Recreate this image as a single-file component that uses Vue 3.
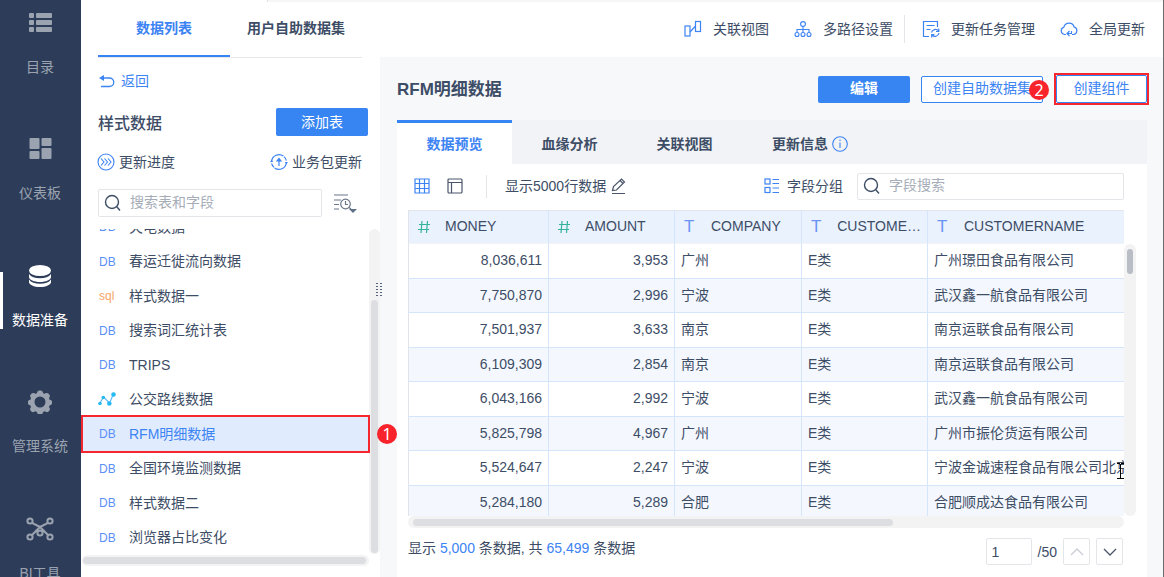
<script setup>
import { ref } from 'vue'

const nav = [
  { id: 'list', label: '目录' },
  { id: 'dash', label: '仪表板' },
  { id: 'db', label: '数据准备', active: true },
  { id: 'gear', label: '管理系统' },
  { id: 'tool', label: 'BI工具' },
]
const tables = [
  { type: 'DB', name: '火电数据' },
  { type: 'DB', name: '春运迁徙流向数据' },
  { type: 'sql', name: '样式数据一' },
  { type: 'DB', name: '搜索词汇统计表' },
  { type: 'DB', name: 'TRIPS' },
  { type: 'line', name: '公交路线数据' },
  { type: 'DB', name: 'RFM明细数据', active: true },
  { type: 'DB', name: '全国环境监测数据' },
  { type: 'DB', name: '样式数据二' },
  { type: 'DB', name: '浏览器占比变化' },
]
const columns = [
  { kind: 'num', name: 'MONEY' },
  { kind: 'num', name: 'AMOUNT' },
  { kind: 'text', name: 'COMPANY' },
  { kind: 'text', name: 'CUSTOME…' },
  { kind: 'text', name: 'CUSTOMERNAME' },
]
const rows = [
  ['8,036,611', '3,953', '广州', 'E类', '广州璟田食品有限公司'],
  ['7,750,870', '2,996', '宁波', 'E类', '武汉鑫一航食品有限公司'],
  ['7,501,937', '3,633', '南京', 'E类', '南京运联食品有限公司'],
  ['6,109,309', '2,854', '南京', 'E类', '南京运联食品有限公司'],
  ['6,043,166', '2,992', '宁波', 'E类', '武汉鑫一航食品有限公司'],
  ['5,825,798', '4,967', '广州', 'E类', '广州市振伦货运有限公司'],
  ['5,524,647', '2,247', '宁波', 'E类', '宁波金诚速程食品有限公司北京'],
  ['5,284,180', '5,289', '合肥', 'E类', '合肥顺成达食品有限公司'],
]
const tableQuery = ref('')
const fieldQuery = ref('')
const page = ref('1')
</script>

<template>
  <div class="app">
    <nav class="sidebar">
      <a v-for="n in nav" :key="n.id" href="#" class="nav-item" :class="{ active: n.active }">
        <span class="nav-icon">
          <svg v-if="n.id === 'list'" width="24" height="24" viewBox="0 0 24 24" fill="currentColor">
            <rect x="1" y="2" width="5" height="5" rx="1" /><rect x="8" y="2" width="16" height="5" rx="1" />
            <rect x="1" y="9" width="5" height="5" rx="1" /><rect x="8" y="9" width="16" height="5" rx="1" />
            <rect x="1" y="16" width="5" height="5" rx="1" /><rect x="8" y="16" width="16" height="5" rx="1" />
          </svg>
          <svg v-else-if="n.id === 'dash'" width="24" height="24" viewBox="0 0 24 24" fill="currentColor">
            <rect x="1.500" y="1" width="10" height="11" rx="1" /><rect x="13.500" y="1" width="10" height="8" rx="1" />
            <rect x="1.500" y="14" width="10" height="8" rx="1" /><rect x="13.500" y="11" width="10" height="11" rx="1" />
          </svg>
          <svg v-else-if="n.id === 'db'" width="24" height="24" viewBox="0 0 24 24" fill="currentColor">
            <ellipse cx="12" cy="6.500" rx="11" ry="5.500" />
            <path d="M1 10c2 3 6 4.300 11 4.300S21 13 23 10v3c0 2.700-5 5-11 5S1 15.700 1 13z" />
            <path d="M1 15.500c2 3 6 4.300 11 4.300s9-1.300 11-4.300v2.500c0 2.900-5 5-11 5S1 20.900 1 18z" />
          </svg>
          <svg v-else-if="n.id === 'gear'" width="24" height="24" viewBox="0 0 24 24" fill="currentColor" fill-rule="evenodd">
            <path d="M9.500 1.500C10 0 14 0 14.500 1.500l.6 1.700 1.500.6 1.700-.8c1.500-.6 4.200 2 3.500 3.500l-.8 1.700.6 1.500 1.600.6c1.200.6 1.200 3.800 0 4.400l-1.600.7-.6 1.500.8 1.700c.7 1.500-2 4.100-3.500 3.500l-1.700-.8-1.500.6-.6 1.700c-.5 1.500-4.500 1.500-5 0l-.6-1.700-1.500-.6-1.700.8c-1.500.6-4.200-2-3.500-3.500l.8-1.700-.6-1.500-1.600-.7c-1.200-.6-1.200-3.800 0-4.400l1.600-.6.6-1.500-.8-1.700C1.500 5 4.200 2.400 5.700 3l1.700.8 1.500-.6zM12 6.500a5.500 5.500 0 1 0 0 11 5.500 5.500 0 0 0 0-11z" />
          </svg>
          <svg v-else width="28" height="24" viewBox="0 0 28 24" fill="none" stroke="currentColor" stroke-width="2">
            <circle cx="4" cy="4" r="2.600" /><circle cx="24" cy="4" r="2.600" /><circle cx="4" cy="20" r="2.600" /><circle cx="24" cy="20" r="2.600" />
            <circle cx="14" cy="16" r="2.600" />
            <path d="M6 5.800l8 4.200 8-4.200M6 18l8-8 8 8M11.500 15L10 12.500M16.500 15l1.500-2.500" />
          </svg>
        </span>
        <span class="nav-label">{{ n.label }}</span>
      </a>
    </nav>

    <aside class="panel">
      <div class="panel-tabs">
        <button class="ptab on">数据列表</button>
        <button class="ptab">用户自助数据集</button>
      </div>
      <div class="panel-head">
        <a href="#" class="back">
          <svg width="17" height="14" viewBox="0 0 17 14" fill="none" stroke="currentColor" stroke-width="1.300">
            <path d="M3 4h8.500a4 4 0 0 1 0 8.500H3" /><path d="M1 4l5-3v6z" fill="currentColor" stroke="none" />
          </svg>
          返回
        </a>
        <div class="title-row">
          <h2>样式数据</h2>
          <button class="primary">添加表</button>
        </div>
        <div class="update-row">
          <button class="plain">
            <svg width="18" height="18" viewBox="0 0 18 18" fill="none" stroke="#3c83f3" stroke-width="1.100">
              <circle cx="9" cy="9" r="8" /><path d="M4 5.500L7 9l-3 3.500M7.500 5.500l3 3.500-3 3.500M11 5.500L14 9l-3 3.500" />
            </svg>
            更新进度
          </button>
          <button class="plain">
            <svg width="18" height="18" viewBox="0 0 18 18" fill="none" stroke="#3c83f3" stroke-width="1.200">
              <path d="M1.600 9A7.400 7.400 0 0 1 14 3.600M16.400 9A7.400 7.400 0 0 1 4 14.400M14 3.600q2 2 2.400 4M4 14.400q-2-2-2.400-4" stroke-dasharray="16 2" />
              <path d="M9 13V6" /><path d="M9 4.500L5.800 8.500h6.400zM0 9h3.200L1.600 6.800zM14.800 9H18l-1.600 2.200z" fill="#3c83f3" stroke="none" />
            </svg>
            业务包更新
          </button>
        </div>
        <div class="search-row">
          <label class="search">
            <svg width="18" height="18" viewBox="0 0 18 18" fill="none" stroke="#3d4d66" stroke-width="1.400"><circle cx="8" cy="8" r="6.500" /><path d="M12.800 12.800L16 16.500" /></svg>
            <input v-model="tableQuery" type="text" placeholder="搜索表和字段" aria-label="搜索表和字段" />
          </label>
          <button class="plain" aria-label="排序">
            <svg width="23" height="20" viewBox="0 0 23 20" fill="none" stroke="#6b7688" stroke-width="1.200">
              <path d="M0 2h14M0 7h7M0 11.500h5M0 16h5" /><circle cx="11.500" cy="11" r="4.800" /><path d="M11.500 8v3.500H14M15 14.500l2 1.500" />
              <path d="M15 16h8l-4 4z" fill="#5f6f87" stroke="none" />
            </svg>
          </button>
        </div>
      </div>
      <div class="list-area">
        <ul class="list">
          <li v-for="t in tables" :key="t.name">
            <a href="#" :class="{ active: t.active }">
              <svg v-if="t.type === 'line'" class="kind" width="18" height="14" viewBox="0 0 18 14" fill="#27b9f2">
                <path d="M2 11l3.500-6 6 6L15.500 2" fill="none" stroke="#5fb8f5" stroke-width="1.200" />
                <circle cx="2" cy="11.500" r="1.800" /><circle cx="5.300" cy="5.500" r="1.800" /><circle cx="11.300" cy="11.500" r="2.300" /><circle cx="15.500" cy="2.500" r="2.300" />
              </svg>
              <span v-else class="kind" :class="{ sql: t.type === 'sql' }">{{ t.type }}</span>
              <span>{{ t.name }}</span>
            </a>
          </li>
        </ul>
        <div class="vbar"><i></i></div>
      </div>
      <div class="hbar"><i></i></div>
      <span class="badge one">1</span>
      <svg class="grip" width="6" height="15" viewBox="0 0 6 15" fill="#55637a">
        <template v-for="k in 5" :key="k"><rect x="0" :y="(k - 1) * 3" width="2" height="1" /><rect x="4" :y="(k - 1) * 3" width="2" height="1" /></template>
      </svg>
    </aside>

    <div class="right">
      <header class="topbar">
        <button class="plain">
          <svg width="18" height="18" viewBox="0 0 18 18" fill="none" stroke="#3c83f3" stroke-width="1.200"><rect x="1" y="6" width="5" height="10" /><rect x="11.500" y="1.500" width="5" height="10" /><path d="M6 12l5.500-6" /></svg>
          关联视图
        </button>
        <button class="plain">
          <svg width="18" height="18" viewBox="0 0 18 18" fill="none" stroke="#3c83f3" stroke-width="1.100"><circle cx="9" cy="4" r="2.400" /><circle cx="3" cy="14.500" r="2" /><circle cx="9" cy="14.500" r="2" /><circle cx="15" cy="14.500" r="2" /><path d="M9 6.400v6M3 12.500V9.500h12v3" /></svg>
          多路径设置
        </button>
        <span class="sep"></span>
        <button class="plain">
          <svg width="18" height="18" viewBox="0 0 18 18" fill="none" stroke="#3c83f3" stroke-width="1.200"><path d="M7 16.500H1.500v-15h14V7M4.500 5.500h8M4.500 9.500h4" /><path d="M9.500 12.500a4 4 0 0 1 7-1.500M17 13a4 4 0 0 1-7 2M16.800 8.500V11.500H14M9.700 17.500V14.700h2.700" /></svg>
          更新任务管理
        </button>
        <button class="plain">
          <svg width="18" height="18" viewBox="0 0 18 18" fill="none" stroke="#3c83f3" stroke-width="1.200"><path d="M6 14.500H4.500a3.800 3.800 0 0 1-.6-7.400 5.300 5.300 0 0 1 10.200-.2 3.900 3.900 0 0 1-.6 7.600H12" /><path d="M7 13.500h4.500V11M9.500 11L7 13.500l2.500 2.500" /></svg>
          全局更新
        </button>
      </header>

      <main class="main">
        <div class="heading">
          <h1>RFM明细数据</h1>
          <button class="primary">编辑</button>
          <div class="badge-host">
            <button class="outline wide">创建自助数据集</button>
            <span class="badge two">2</span>
          </div>
          <div class="mark"><button class="outline">创建组件</button></div>
        </div>

        <div class="card">
          <div class="tabs">
            <button class="tab on">数据预览</button>
            <button class="tab">血缘分析</button>
            <button class="tab">关联视图</button>
            <button class="tab info">更新信息
              <svg width="16" height="16" viewBox="0 0 16 16" fill="none" stroke="#3c83f3" stroke-width="1.100"><circle cx="8" cy="8" r="7.300" /><path d="M8 6.500V12M8 3.500v1.500" /></svg>
            </button>
          </div>

          <div class="tools">
            <button class="plain" aria-label="表格">
              <svg width="16" height="16" viewBox="0 0 16 16" fill="none" stroke="#3c83f3" stroke-width="1.200"><path d="M1 1h14v14H1zM1 5.500h14M1 10.500h14M5.500 1v14M10.500 1v14" /></svg>
            </button>
            <button class="plain second" aria-label="布局">
              <svg width="16" height="16" viewBox="0 0 16 16" fill="none" stroke="#4b566b" stroke-width="1.200"><rect x="1" y="1" width="14" height="14" rx="1" /><path d="M1 4.500h14M4.500 4.500V15" /></svg>
            </button>
            <span class="sep short"></span>
            <button class="plain limit">显示5000行数据
              <svg width="16" height="18" viewBox="0 0 16 18" fill="none" stroke="#4b566b" stroke-width="1.200"><path d="M1.500 13.500l1-4L10.500 2l3 3-8 8zM9 3.500l3 3M1 16.500h13" /></svg>
            </button>
            <button class="plain group">
              <svg width="16" height="16" viewBox="0 0 16 16" fill="none" stroke="#3c83f3" stroke-width="1.200"><rect x="1" y="1" width="5" height="5" /><rect x="1" y="9.500" width="5" height="5" /><path d="M8.500 1.500H15M8.500 5.500H15M8.500 10H15M8.500 14.500H15" /></svg>
              字段分组
            </button>
            <label class="search field">
              <svg width="18" height="18" viewBox="0 0 18 18" fill="none" stroke="#3d4d66" stroke-width="1.400"><circle cx="8" cy="8" r="6.500" /><path d="M12.800 12.800L16 16.500" /></svg>
              <input v-model="fieldQuery" type="text" placeholder="字段搜索" aria-label="字段搜索" />
            </label>
          </div>

          <div class="grid-area">
            <div class="grid-clip">
              <table>
                <colgroup><col class="c1" /><col class="c2" /><col class="c3" /><col class="c2" /><col /></colgroup>
                <thead>
                  <tr>
                    <th v-for="c in columns" :key="c.name">
                      <div class="th">
                        <svg v-if="c.kind === 'num'" width="12" height="14" viewBox="0 0 12 14" fill="none" stroke="#35b39d" stroke-width="1.200"><path d="M4 1L3 13M9.500 1l-1 12M1 4.500h11M0 9.500h11" /></svg>
                        <span v-else class="tt">T</span>
                        <span class="cn">{{ c.name }}</span>
                      </div>
                    </th>
                  </tr>
                </thead>
                <tbody>
                  <tr v-for="(r, i) in rows" :key="i">
                    <td v-for="(v, j) in r" :key="j" :class="{ num: j < 2 }">{{ v }}</td>
                  </tr>
                </tbody>
              </table>
            </div>
            <div class="gv"><i></i></div>
            <svg class="cursor" width="7" height="16" viewBox="0 0 7 16" fill="none" stroke="#000"><path d="M0 .5h3M4 .5h3M3.500 1v14M0 15.500h7" /></svg>
          </div>
          <div class="gh"><i></i></div>

          <footer class="foot">
            <p>显示 <b>5,000</b> 条数据, 共 <b>65,499</b> 条数据</p>
            <div class="pager">
              <input v-model="page" type="text" aria-label="页码" />
              <span>/50</span>
              <button aria-label="上一页" disabled><svg width="14" height="8" viewBox="0 0 14 8" fill="none" stroke="#c9ced6" stroke-width="1.300"><path d="M1 7l6-6 6 6" /></svg></button>
              <button class="next" aria-label="下一页"><svg width="14" height="8" viewBox="0 0 14 8" fill="none" stroke="#4b566b" stroke-width="1.300"><path d="M1 1l6 6 6-6" /></svg></button>
            </div>
          </footer>
        </div>
      </main>
    </div>
  </div>
</template>

<style>
body { margin: 0; overflow: hidden; }
</style>

<style scoped>
* { box-sizing: border-box; }
.app {
  position: relative;
  display: flex; height: 100vh; overflow: hidden; background: #fff;
  font-family: "Liberation Sans", "Noto Sans CJK SC", sans-serif;
  font-size: 14px; line-height: 20px; color: #3d4d66;
  border-right: 1px solid #6b6b6b;
}
.app::before { content: ""; position: absolute; left: 267px; right: 0; top: 0; height: 2px; background: #f6f6f6; border-left: 1px solid #e2e2e2; }
button, input { font: inherit; color: inherit; }
button { padding: 0; border: 0; background: none; white-space: nowrap; }
a { color: inherit; text-decoration: none; }
h1, h2, p, ul { margin: 0; padding: 0; }
svg { flex: none; display: block; }
i { display: block; }

.sidebar { flex: none; width: 81px; background: #2d3d59; display: grid; grid-auto-rows: 126px 127px; align-content: start; overflow: hidden; }
.nav-item { position: relative; display: flex; flex-direction: column; align-items: center; gap: 22px; padding: 11px 1px 0 0; color: #9ba3b0; }
.nav-item.active { color: #fff; }
.nav-item.active::before { content: ""; position: absolute; left: 0; top: 19px; width: 3px; height: 57px; background: #fff; }
.nav-icon { height: 24px; }

.panel { position: relative; flex: none; width: 299px; display: flex; flex-direction: column; }
.panel-tabs { display: flex; margin: 0 18px 0 17px; height: 58px; border-bottom: 1px solid #e6e8ec; flex: none; }
.ptab { width: 132px; height: 57px; font-weight: 700; border-bottom: 2px solid transparent; }
.ptab.on { color: #3c83f3; border-color: #3685f2; }
.panel-head { padding: 12px 12px 0 17px; flex: none; }
.back { display: flex; align-items: center; gap: 6px; color: #3c83f3; height: 22px; }
.title-row { display: flex; align-items: center; justify-content: space-between; margin-top: 16px; height: 28px; }
h2 { font-size: 16px; font-weight: 500; padding-top: 3px; }
.primary { width: 92px; height: 28px; border-radius: 2px; background: #3685f2; color: #fff; }
.plain { display: flex; align-items: center; }
.update-row { display: flex; justify-content: space-between; margin: 16px 6px 0 -1px; }
.update-row .plain { gap: 4px; }
.search-row { display: flex; align-items: center; gap: 12px; margin-top: 17px; }
.search { display: flex; align-items: center; gap: 8px; width: 224px; height: 28px; padding: 0 5px; border: 1px solid #e3e5e9; border-radius: 2px; background: #fff; }
.search input { flex: 1; min-width: 0; border: 0; padding: 0 0 3px; background: none; outline: 0; }
.search input::placeholder { color: #a6adb8; opacity: 1; }

.list-area { flex: 1; min-height: 0; display: flex; margin-top: 12px; }
.list { flex: 1; list-style: none; display: flex; flex-direction: column; justify-content: flex-end; overflow-x: visible; overflow-y: clip; }
.list li { flex: none; height: 34px; }
.list li:nth-child(odd) { height: 35px; }
.list a { display: flex; align-items: center; height: 100%; padding-left: 17px; gap: 13px; }
.list a.active { position: relative; z-index: 1; height: 38px; margin: -1px -1px 0 0; background: #e0ecfd; border: 2px solid #f5262d; padding: 0 0 1px 15px; color: #3c83f3; }
.kind { width: 18px; font-size: 12px; padding: 1px 0 0 1px; color: #5b8ff5; }
svg.kind { padding: 0; }
.kind.sql { color: #f7a468; }
.vbar { flex: none; width: 11px; border-radius: 6px; background: #f3f3f3; padding: 71px 2px 1px; }
.vbar i { height: 100%; border-radius: 4px; background: #dcdee2; }
.hbar { flex: none; height: 11px; margin: 1px 11px 11px 1px; padding: 2px 3px 2px 1px; border-radius: 6px; background: #f3f3f3; }
.hbar i { height: 7px; border-radius: 4px; background: #dcdee2; }
.badge { position: absolute; z-index: 2; width: 20px; height: 20px; border-radius: 50%; background: #f9232c; color: #fff; font: 16px/20px "Noto Sans", sans-serif; text-align: center; }
.badge.one { left: 296px; top: 424px; }
.grip { position: absolute; z-index: 2; left: 295px; top: 283px; }

.right { flex: 1; min-width: 0; display: flex; flex-direction: column; }
.topbar { flex: none; height: 57px; display: flex; align-items: center; justify-content: flex-end; padding: 0 18px 0 0; }
.topbar .plain { gap: 11px; margin-left: 25px; }
.topbar .sep { margin-left: 11px; }
.topbar .sep + .plain { margin-left: 17px; }
.sep { width: 1px; height: 28px; background: #e3e5e9; }
.main { flex: 1; min-height: 0; background: #f7f8fa; padding: 16px 16px 0 17px; display: flex; flex-direction: column; }
.heading { display: flex; align-items: center; height: 32px; margin-right: -2px; }
h1 { flex: 1; font-size: 17px; font-weight: 700; padding-top: 2px; }
.heading .primary { height: 27px; font-weight: 700; padding-bottom: 2px; }
.badge-host { position: relative; margin: 0 11px; }
.outline { display: block; width: 91px; height: 28px; padding-bottom: 2px; border: 1px solid #3685f2; border-radius: 2px; background: #fff; color: #3c83f3; }
.outline.wide { width: 122px; height: 27px; }
.badge.two { right: -6px; top: 4px; }
.mark { border: 2px solid #f5262d; }
.card { flex: 1; min-height: 0; margin-top: 15px; background: #fff; display: flex; flex-direction: column; }
.tabs { flex: none; display: flex; height: 44px; background: #f2f3f7; }
.tab { width: 115px; font-weight: 700; border-top: 3px solid transparent; }
.tab.on { background: #fff; border-color: #3685f2; color: #3c83f3; }
.tab.info { display: flex; align-items: center; gap: 4px; padding-left: 30px; }
.tools { flex: none; display: flex; align-items: center; height: 46px; padding: 0 23px 2px 17px; }
.second { margin-left: 17px; }
.sep.short { height: 23px; margin: 0 18px 0 23px; }
.limit { gap: 5px; }
.group { margin-left: auto; gap: 7px; }
.search.field { width: 267px; height: 27px; margin-left: 14px; }
.grid-area { position: relative; flex: 1; min-height: 0; margin: 0 23px 0 11px; }
.grid-clip { height: 100%; overflow: hidden; }
table { width: 100%; border-collapse: separate; border-spacing: 0; table-layout: fixed; }
.c1 { width: 141px; }
.c2 { width: 126px; }
.c3 { width: 127px; }
th, td { border-right: 1px solid #d5e5fb; padding: 0 6px; white-space: nowrap; overflow: hidden; font-weight: 400; text-align: left; }
th:first-child, td:first-child { border-left: 1px solid #e0e4ea; }
th:last-child, td:last-child { border-right: 0; }
th { height: 34px; background: #eaf2fe; border-top: 1px solid #e3e7ec; border-bottom: 1px solid #f0f3f7; }
.th { display: flex; align-items: center; gap: 15px; padding-left: 3px; }
.cn { padding-bottom: 2px; }
.tt { width: 12px; font-size: 17px; color: #6b93f5; }
td { height: 34px; padding-bottom: 2px; border-bottom: 1px solid #d5e5fb; }
tbody tr:nth-child(odd) td { height: 35px; }
tbody tr:nth-child(even) td { background: #f4f8fe; }
td.num { text-align: right; }
.gv { position: absolute; left: 100%; top: 34px; bottom: 0; width: 12px; padding: 5px 3px; border-radius: 6px; background: #f3f3f3; }
.gv i { height: 25px; border-radius: 4px; background: #b9bdc6; }
.gh { flex: none; height: 12px; margin: 0 23px 0 11px; padding: 3px 5px; border-radius: 6px; background: #f3f3f3; }
.gh i { width: 68%; height: 7px; border-radius: 4px; background: #dcdee2; }
.cursor { position: absolute; right: 0; top: 253px; }
.foot { flex: none; height: 49px; display: flex; align-items: flex-start; justify-content: space-between; padding: 10px 24px 0 11px; }
b { font-weight: 400; color: #3c83f3; }
.pager { display: flex; align-items: center; gap: 6px; }
.pager input { width: 46px; height: 27px; padding: 0 5px; border: 1px solid #e3e5e9; border-radius: 2px; outline: 0; }
.pager button { width: 27px; height: 27px; display: grid; place-items: center; border: 1px solid #e3e5e9; border-radius: 2px; background: #fff; }
</style>
